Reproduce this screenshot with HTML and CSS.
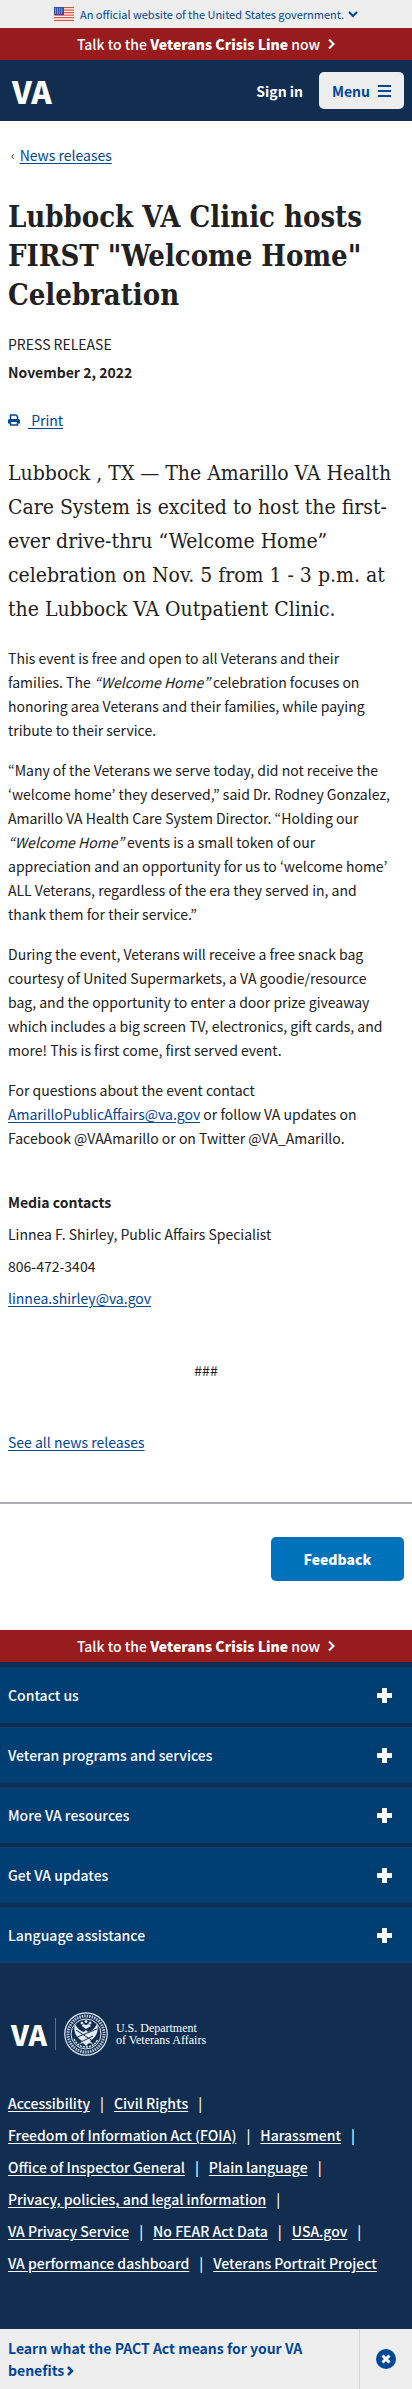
FILE: index.html
```html
<!DOCTYPE html>
<html lang="en">
<head>
<meta charset="utf-8">
<meta name="viewport" content="width=device-width, initial-scale=1">
<title>Lubbock VA Clinic hosts FIRST "Welcome Home" Celebration</title>
<link rel="stylesheet" href="styles.css">
</head>
<body>
<header>
  <div class="gov">
    <svg class="flag" width="20" height="14" viewBox="0 0 20 14" aria-hidden="true">
      <rect width="20" height="14" fill="#fff"/>
      <path d="M0 .7h20M0 3.2h20M0 5.7h20M0 8.2h20M0 10.7h20M0 13.3h20" stroke="#e0503c" stroke-width="1.3"/>
      <rect width="10" height="8" fill="#3450a8"/>
      <path d="M1 2h8M1 4h8M1 6h8" stroke="#c5cdea" stroke-width="1" stroke-dasharray="1 1"/>
    </svg>
    <button class="gov-toggle" type="button">An official website of the United States government.
      <svg width="10" height="7" viewBox="0 0 10 7" aria-hidden="true"><path d="M1 1l4 4 4-4" fill="none" stroke="currentColor" stroke-width="2"/></svg>
    </button>
  </div>
  <a class="crisis" href="#crisis"><span>Talk to the <strong>Veterans Crisis Line</strong> now</span>
    <svg width="7" height="12" viewBox="0 0 7 12" aria-hidden="true"><path d="M1 1.500l4.500 4.500L1 10.500" fill="none" stroke="currentColor" stroke-width="2"/></svg></a>
  <div class="topbar">
    <a class="logo" href="#home">VA</a>
    <div class="topbar-actions">
      <button class="signin" type="button">Sign in</button>
      <button class="menu" type="button">Menu
        <svg width="13" height="12" viewBox="0 0 13 12" aria-hidden="true"><path d="M0 1h13M0 6h13M0 11h13" stroke="currentColor" stroke-width="2"/></svg>
      </button>
    </div>
  </div>
</header>

<main>
  <nav class="crumbs" aria-label="Breadcrumb"><span class="crumb-arrow">‹</span><a href="#news">News releases</a></nav>
  <article class="release">
    <h1>Lubbock VA Clinic hosts FIRST "Welcome Home" Celebration</h1>
    <p class="kind">PRESS RELEASE</p>
    <p class="date">November 2, 2022</p>
    <a class="print" href="#print">
      <svg width="12" height="12" viewBox="0 0 12 12" aria-hidden="true"><path d="M2.500 5.500V1h5.500l1.500 1.500v3M2.500 8v3h7V8" fill="none" stroke="currentColor" stroke-width="1.500"/><path d="M0 9.500V6.500Q0 5 1.500 5h9Q12 5 12 6.500v3H9.500V8h-7v1.500z" fill="currentColor"/></svg><span>&nbsp;Print</span></a>
    <p class="intro">Lubbock , TX — The Amarillo VA Health Care System is excited to host the first-ever drive-thru “Welcome Home” celebration on Nov. 5 from 1 - 3 p.m. at the Lubbock VA Outpatient Clinic.</p>
    <div class="copy">
      <p>This event is free and open to all Veterans and their families. The <em>“Welcome Home”</em> celebration focuses on honoring area Veterans and their families, while paying tribute to their service.</p>
      <p>“Many of the Veterans we serve today, did not receive the ‘welcome home’ they deserved,” said Dr. Rodney Gonzalez, Amarillo VA Health Care System Director. “Holding our <em>“Welcome Home”</em> events is a small token of our appreciation and an opportunity for us to ‘welcome home’ ALL Veterans, regardless of the era they served in, and thank them for their service.”</p>
      <p>During the event, Veterans will receive a free snack bag courtesy of United Supermarkets, a VA goodie/resource bag, and the opportunity to enter a door prize giveaway which includes a big screen TV, electronics, gift cards, and more! This is first come, first served event.</p>
      <p>For questions about the event contact <a href="mailto:AmarilloPublicAffairs@va.gov">AmarilloPublicAffairs@va.gov</a> or follow VA updates on Facebook @VAAmarillo or on Twitter @VA_Amarillo.</p>
    </div>
    <section class="contacts">
      <p><strong>Media contacts</strong></p>
      <p>Linnea F. Shirley, Public Affairs Specialist</p>
      <p>806-472-3404</p>
      <p><a href="mailto:linnea.shirley@va.gov">linnea.shirley@va.gov</a></p>
    </section>
    <p class="end">###</p>
    <a href="#all">See all news releases</a>
  </article>
  <div class="feedback-row"><button class="feedback" type="button">Feedback</button></div>
</main>

<footer>
  <a class="crisis" href="#crisis"><span>Talk to the <strong>Veterans Crisis Line</strong> now</span>
    <svg width="7" height="12" viewBox="0 0 7 12" aria-hidden="true"><path d="M1 1.500l4.500 4.500L1 10.500" fill="none" stroke="currentColor" stroke-width="2"/></svg></a>
  <div class="accordion">
    <button type="button">Contact us<svg width="15" height="15" viewBox="0 0 15 15" aria-hidden="true"><path d="M7.500 0v15M0 7.500h15" stroke="currentColor" stroke-width="5"/></svg></button>
    <button type="button">Veteran programs and services<svg width="15" height="15" viewBox="0 0 15 15" aria-hidden="true"><path d="M7.500 0v15M0 7.500h15" stroke="currentColor" stroke-width="5"/></svg></button>
    <button type="button">More VA resources<svg width="15" height="15" viewBox="0 0 15 15" aria-hidden="true"><path d="M7.500 0v15M0 7.500h15" stroke="currentColor" stroke-width="5"/></svg></button>
    <button type="button">Get VA updates<svg width="15" height="15" viewBox="0 0 15 15" aria-hidden="true"><path d="M7.500 0v15M0 7.500h15" stroke="currentColor" stroke-width="5"/></svg></button>
    <button type="button">Language assistance<svg width="15" height="15" viewBox="0 0 15 15" aria-hidden="true"><path d="M7.500 0v15M0 7.500h15" stroke="currentColor" stroke-width="5"/></svg></button>
  </div>
  <div class="foot-body">
    <a class="dept" href="#home">
      <span class="dept-va">VA</span>
      <svg width="44" height="44" viewBox="0 0 44 44" aria-hidden="true" fill="none" stroke="#e4ebf5">
        <circle cx="22" cy="22" r="21.200" stroke-width="1.200"/>
        <circle cx="22" cy="22" r="18" stroke-width="3" stroke-dasharray="1.500 1" stroke="#b8c6da"/>
        <circle cx="22" cy="22" r="15" stroke-width="1"/>
        <path d="M22 17l-4-3 1-2 3 1 3-1 2 2zM20 20c-4-1-7-4-9-8-2 6 0 13 7 17l-3 3 4-1 3 3 3-3 4 1-3-3c7-4 9-11 7-17-2 4-5 7-9 8l-2-2z" fill="#e4ebf5" stroke="none"/>
        <path d="M11 26l22-9M12 18l20 13M15 31l14-7" stroke="#112e51" stroke-width="1"/>
        <path d="M10 27q4 8 12 8t12-8" stroke-width="1.500" stroke-dasharray="2 1"/>
        <circle cx="18" cy="11" r="1" fill="#fff"/><circle cx="22" cy="9.500" r="1" fill="#fff"/><circle cx="26" cy="11" r="1" fill="#fff"/>
      </svg>
      <span class="dept-name">U.S. Department<br>of Veterans Affairs</span>
    </a>
    <ul class="links">
      <li><a href="#a">Accessibility</a></li>
      <li><a href="#b">Civil Rights</a></li>
      <li><a href="#c">Freedom of Information Act (FOIA)</a></li>
      <li><a href="#d">Harassment</a></li>
      <li><a href="#e">Office of Inspector General</a></li>
      <li><a href="#f">Plain language</a></li>
      <li><a href="#g">Privacy, policies, and legal information</a></li>
      <li><a href="#h">VA Privacy Service</a></li>
      <li><a href="#i">No FEAR Act Data</a></li>
      <li><a href="#j">USA.gov</a></li>
      <li><a href="#k">VA performance dashboard</a></li>
      <li><a href="#l">Veterans Portrait Project</a></li>
    </ul>
  </div>
</footer>
<aside class="promo">
  <a class="promo-link" href="#pact">Learn what the PACT Act means for your VA benefits <svg width="7" height="10" viewBox="0 0 7 10" aria-hidden="true"><path d="M1 1l4 4-4 4" fill="none" stroke="currentColor" stroke-width="2.500"/></svg></a>
  <button class="promo-close" type="button" aria-label="Dismiss">
    <svg width="20" height="20" viewBox="0 0 20 20" aria-hidden="true"><circle cx="10" cy="10" r="10" fill="currentColor"/><path d="M6.500 6.500l7 7M13.500 6.500l-7 7" stroke="#fff" stroke-width="3"/></svg>
  </button>
</aside>
</body>
</html>
```

FILE: styles.css
```css
* { box-sizing: border-box; }
body {
  margin: 0;
  background: #fff;
  color: #212121;
  font-family: "Noto Sans CJK KR", "Open Sans", sans-serif;
  font-size: 14px;
  line-height: 24px;
}
p, h1, ul { margin: 0; padding: 0; }
a { color: #004795; text-underline-offset: 2px; }
button {
  border: 0;
  padding: 0;
  background: none;
  color: inherit;
  font: inherit;
  cursor: pointer;
}
svg { flex: none; }

.gov {
  display: flex;
  align-items: center;
  justify-content: center;
  gap: 6px;
  height: 28px;
  background: #eee;
}
.gov-toggle {
  display: flex;
  align-items: center;
  gap: 4px;
  color: #004795;
  font-size: 11px;
}
.crisis {
  display: flex;
  align-items: center;
  justify-content: center;
  gap: 8px;
  height: 32px;
  background: #981b1e;
  color: #fff;
  font-weight: 500;
  text-decoration: none;
}
.crisis strong { font-weight: 900; }
.topbar {
  display: flex;
  align-items: center;
  justify-content: space-between;
  height: 61px;
  padding: 0 8px 0 12px;
  background: #112e51;
  color: #fff;
}
.logo, .dept-va {
  color: #fff;
  font-weight: 900;
  text-decoration: none;
}
.logo { font-size: 31px; }
.topbar-actions {
  display: flex;
  align-items: center;
  gap: 16px;
  font-weight: 700;
}
.menu {
  display: flex;
  align-items: center;
  gap: 8px;
  height: 37px;
  padding: 0 13px;
  border-radius: 5px;
  background: #eee;
  color: #004795;
}

.crumbs {
  display: flex;
  gap: 5px;
  padding: 22px 8px 0 11px;
}
.crumb-arrow { font-size: 12px; }
.release { padding: 31px 8px 48px; }
h1 {
  margin-bottom: 17px;
  font-family: "DejaVu Serif Condensed", "DejaVu Serif", serif;
  font-size: 29px;
  line-height: 39px;
}
.date { margin: 4px 0 24px; font-weight: 700; }
.print {
  display: flex;
  align-items: center;
  gap: 8px;
  text-decoration: none;
}
.print span { text-decoration: underline; }
.intro {
  margin: 24px 0 20px;
  font-family: "DejaVu Serif Condensed", "DejaVu Serif", serif;
  font-size: 21px;
  line-height: 34px;
}
.copy, .contacts { display: grid; }
.copy { gap: 16px; padding-right: 10px; }
.contacts { gap: 8px; margin: 40px 0 48px; }
.end { margin-bottom: 48px; text-align: center; }
.feedback-row {
  display: flex;
  justify-content: flex-end;
  padding: 33px 8px 49px;
  border-top: 2px solid #aeb0b5;
}
.feedback {
  width: 133px;
  height: 44px;
  border-radius: 5px;
  background: #0071bb;
  color: #fff;
  font-weight: 900;
}

footer { background: #112e51; color: #fff; }
.accordion {
  display: grid;
  gap: 4px;
  padding-top: 5px;
  font-weight: 500;
}
.accordion button {
  display: flex;
  align-items: center;
  justify-content: space-between;
  height: 56px;
  padding: 0 20px 0 8px;
  background: #003e73;
  text-align: left;
}
.foot-body { padding: 49px 8px 50px; font-weight: 500; }
.dept {
  display: flex;
  align-items: center;
  gap: 8px;
  padding-left: 3px;
  color: #fff;
  text-decoration: none;
}
.dept-va {
  padding-right: 8px;
  border-right: 1px solid #58708f;
  font-size: 28px;
  line-height: 32px;
}
.dept-name {
  font-family: "Liberation Serif", serif;
  font-size: 12px;
  line-height: 12px;
}
.links {
  display: flex;
  flex-wrap: wrap;
  margin-top: 31px;
  line-height: 32px;
  list-style: none;
}
.links a { color: #fff; }
.links li:not(:last-child)::after { content: "|"; margin: 0 10px; }

.promo { display: flex; background: #eee; }
.promo-link {
  flex: 1;
  padding: 8px 40px 8px 8px;
  color: #004795;
  font-weight: 700;
  line-height: 22px;
  text-decoration: none;
}
.promo-close {
  display: flex;
  align-items: center;
  justify-content: center;
  width: 53px;
  border-left: 1px solid #d6d7d9;
  color: #004795;
}
```
